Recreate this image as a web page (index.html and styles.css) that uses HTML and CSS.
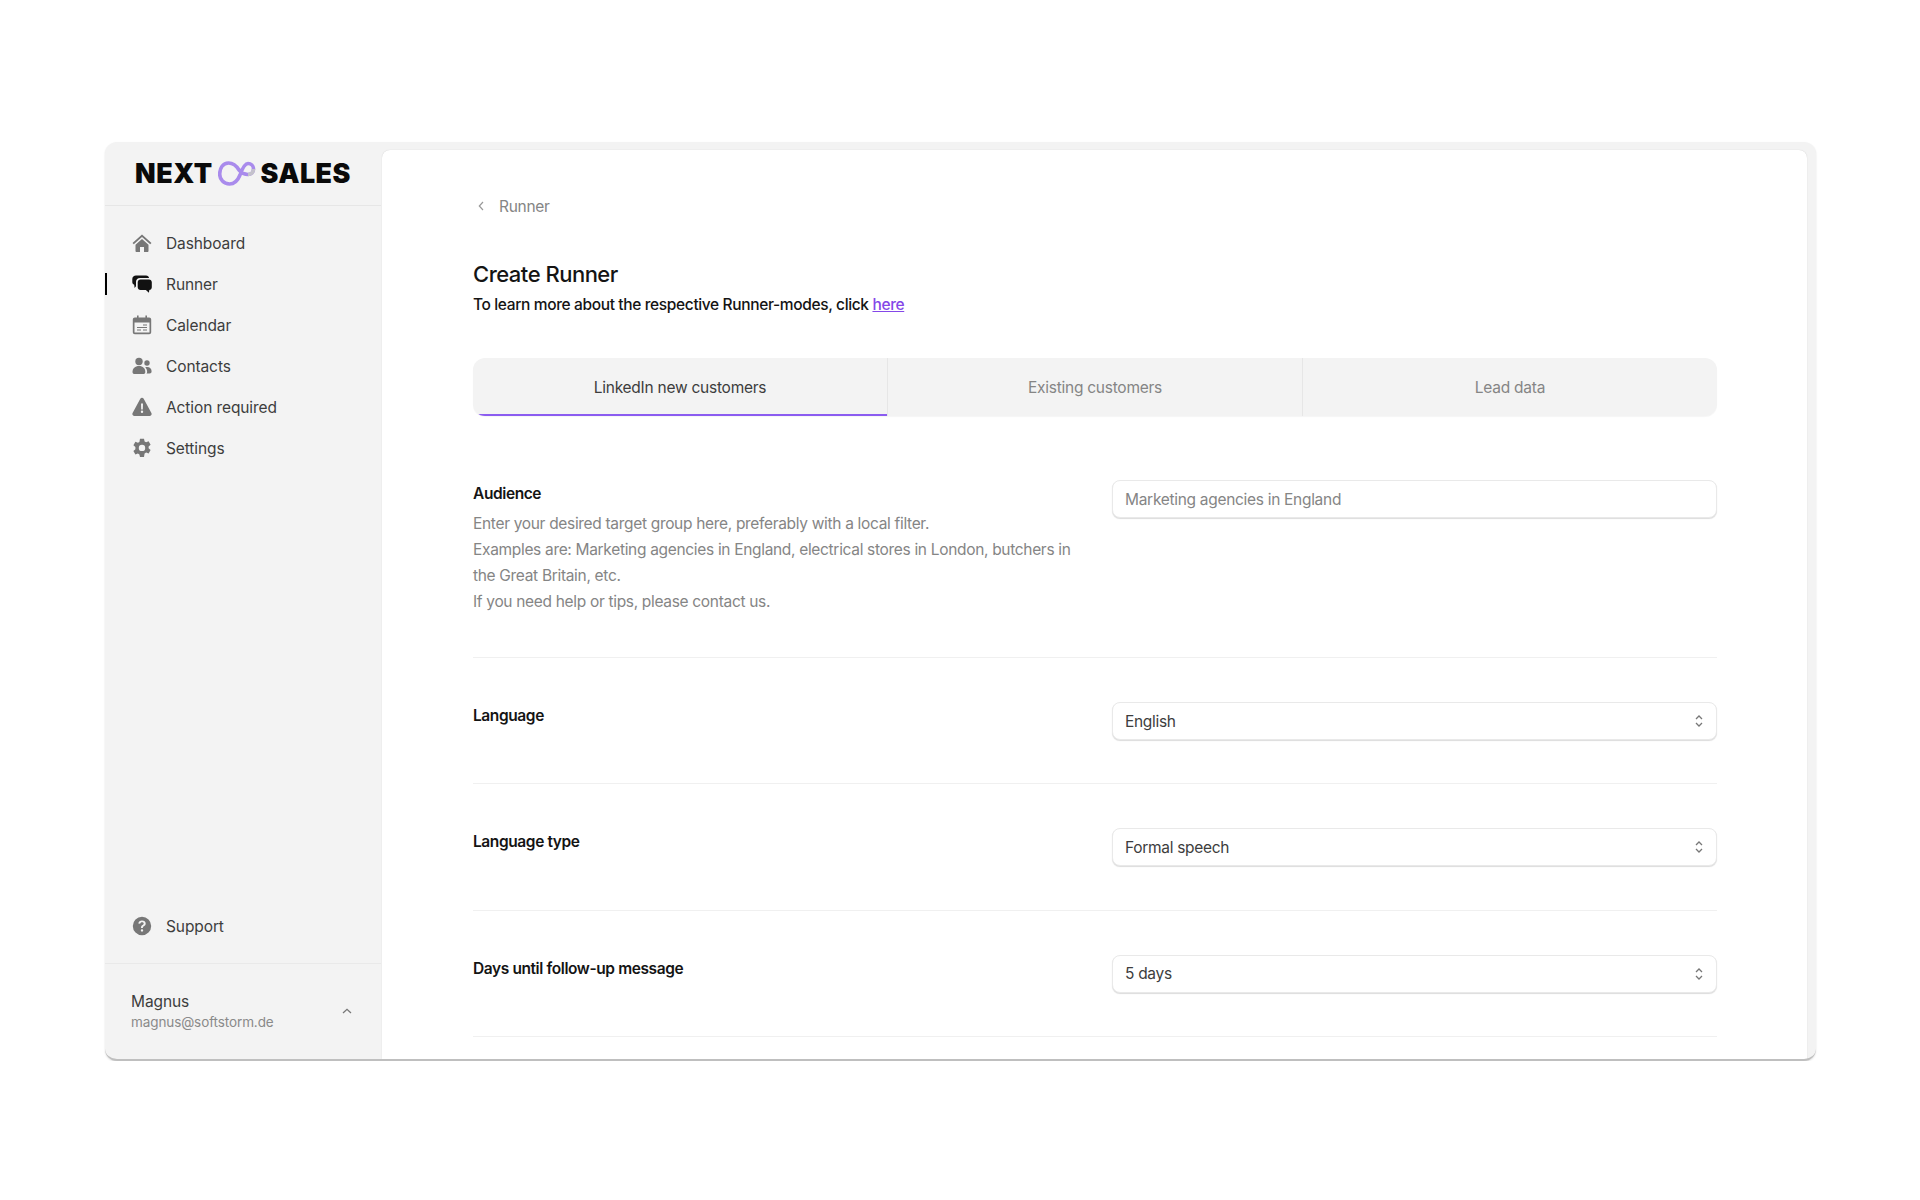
FILE: index.html
```html
<!DOCTYPE html>
<html lang="en">
<head>
    <meta charset="UTF-8">
    <meta name="viewport" content="width=device-width, initial-scale=1.0">
    <title>Create Runner</title>
    <link rel="stylesheet" href="styles.css">
</head>
<body>
    <div class="shell">
        <aside class="sidebar">
            <div class="logo">
                <span>NEXT</span>
                <svg class="logo-mark" viewBox="0 0 38 26" width="38" height="26">
                    <path d="M21 10C18 5 14.500 3 10.500 3 5 3 1.700 8 1.700 14c0 5.500 4 10 9.800 10 5 0 8.500-4 10.500-9 1.800-5 4.500-11.500 8-11.500 3 0 5.500 2.500 5.500 5.500s-2.500 5.500-5.500 5.500c-3.500 0-6.500-1.500-9-4.500z" fill="none" stroke="#a98bec" stroke-width="3.600"/>
                    <path d="M35.500 9c0 3-2.500 5.500-5.500 5.500" fill="none" stroke="#c4c2cb" stroke-width="3.600"/>
                </svg>
                <span>SALES</span>
            </div>
            <nav class="nav">
                <a class="nav-item">
                    <svg class="nav-icon" viewBox="0 0 20 20"><path d="M10 1.500 0.500 10l1.300 1.300L10 4l8.200 7.300 1.300-1.300zM3.500 11.700 10 6l6.500 5.700V18a.9.9 0 0 1-.9.900H12v-5H8v5H4.400a.9.900 0 0 1-.9-.9z"/></svg>
                    Dashboard
                </a>
                <a class="nav-item active">
                    <svg class="nav-icon" viewBox="0 0 20 20"><path d="M7 1.500h7c1.700 0 3 1 3 2.500H8C5.800 4 4 5.500 4 7.800v4.400L2.600 14l-.4-3.200C1 10.400.3 9.300.3 8V5C.3 3 2 1.500 4 1.500z"/><path d="M8.500 5.500h8.500c1.600 0 2.800 1.200 2.800 2.800v4.900c0 1.500-1.100 2.700-2.500 2.800l-.4 2.800-3-2.800H8.500c-1.600 0-2.800-1.200-2.800-2.800V8.300c0-1.600 1.200-2.800 2.800-2.800z"/></svg>
                    Runner
                </a>
                <a class="nav-item">
                    <svg class="nav-icon" viewBox="0 0 20 20"><path fill-rule="evenodd" d="M5 .5h1.600v2h6.800v-2H15v2h2.200c1.100 0 2 .9 2 2v12.800c0 1.100-.9 2-2 2H2.800c-1.100 0-2-.9-2-2V4.500c0-1.100.9-2 2-2H5zM2.500 7.500v9.800c0 .2.100.3.300.3h14.400c.2 0 .3-.1.300-.3V7.500z"/><path d="M11 9.500h4v1h-4zM5 12h10v1H5zM5 14.500h4v1H5zM11 14.500h4v1h-4z"/></svg>
                    Calendar
                </a>
                <a class="nav-item">
                    <svg class="nav-icon" viewBox="0 0 20 20"><circle cx="7" cy="5.500" r="3.700"/><circle cx="15" cy="7" r="2.700"/><path d="M.5 16c0-3.500 2.500-6 6.500-6s6.300 2.500 6.300 6c0 1.500-1 2-2 2H2.500c-1 0-2-.5-2-2z"/><path d="M14.500 17.500c.5-.5.600-1 .6-1.700 0-1.800-.7-3.300-1.900-4.500.6-.3 1.200-.4 1.900-.4 2.800 0 4.500 1.800 4.500 4.300 0 1.300-.8 2.300-2 2.300z"/></svg>
                    Contacts
                </a>
                <a class="nav-item">
                    <svg class="nav-icon" viewBox="0 0 20 20"><path fill-rule="evenodd" d="M10 .8c.7 0 1.300.4 1.700 1l7.700 14.300c.7 1.400-.2 2.900-1.700 2.900H2.300C.8 19-.1 17.500.6 16.100L8.300 1.800c.4-.6 1-1 1.700-1zM9 6.500l.2 6h1.600l.2-6zM10 13.600a1.200 1.200 0 1 0 0 2.400 1.200 1.200 0 0 0 0-2.400z"/></svg>
                    Action required
                </a>
                <a class="nav-item">
                    <svg class="nav-icon" viewBox="0 0 20 20"><path fill-rule="evenodd" d="M8 .8h4l.6 2.600 1.500.8 2.500-.9 2 3.400-2 1.800v1.700l2 1.800-2 3.400-2.500-.9-1.500.9L12 18.900H8l-.6-2.500-1.500-.9-2.500.9-2-3.400 2-1.800V9l-2-1.800 2-3.400 2.500.9 1.500-.8zM10 6.700a3.200 3.200 0 1 0 0 6.400 3.200 3.200 0 0 0 0-6.400z"/></svg>
                    Settings
                </a>
            </nav>
            <a class="nav-item support">
                <svg class="nav-icon" viewBox="0 0 20 20"><path fill-rule="evenodd" d="M10 .8a9.200 9.200 0 1 1 0 18.400A9.200 9.200 0 0 1 10 .8zM10 4.500c-2 0-3.400 1-3.700 2.900l1.800.4c.2-1 .9-1.600 1.900-1.600s1.700.5 1.700 1.300c0 .7-.4 1-1.200 1.500-1 .6-1.500 1.300-1.500 2.400v.6h1.900v-.4c0-.6.300-.9 1-1.300 1-.6 1.800-1.300 1.800-2.800 0-1.900-1.500-3-3.700-3zM10 13.200a1.200 1.200 0 1 0 0 2.400 1.200 1.200 0 0 0 0-2.400z"/></svg>
                Support
            </a>
            <div class="user">
                <div>
                    <div class="user-name">Magnus</div>
                    <div class="user-mail">magnus@softstorm.de</div>
                </div>
                <svg class="user-toggle" viewBox="0 0 10 6" width="10" height="6"><path d="M1 5l4-3.700L9 5" fill="none" stroke="#777" stroke-width="1.300"/></svg>
            </div>
        </aside>

        <main class="main">
            <a class="crumb">
                <svg viewBox="0 0 6 10" width="6" height="10"><path d="M5 1 1.300 5 5 9" fill="none" stroke="#999" stroke-width="1.200"/></svg>
                Runner
            </a>
            <h1 class="title">Create Runner</h1>
            <p class="subtitle">To learn more about the respective Runner-modes, click <a href="#">here</a></p>

            <div class="tabs">
                <div class="tab active">LinkedIn new customers</div>
                <div class="tab">Existing customers</div>
                <div class="tab">Lead data</div>
            </div>

            <section class="row first">
                <div>
                    <div class="label">Audience</div>
                    <p class="help">Enter your desired target group here, preferably with a local filter.<br>Examples are: Marketing agencies in England, electrical stores in London, butchers in the Great Britain, etc.<br>If you need help or tips, please contact us.</p>
                </div>
                <input class="field" type="text" placeholder="Marketing agencies in England">
            </section>

            <section class="row">
                <div class="label">Language</div>
                <button class="field select">English
                    <svg viewBox="0 0 8 14" width="8" height="14"><path d="M1 5l3-3 3 3M1 9l3 3 3-3" fill="none" stroke="#777" stroke-width="1.300"/></svg>
                </button>
            </section>

            <section class="row">
                <div class="label">Language type</div>
                <button class="field select">Formal speech
                    <svg viewBox="0 0 8 14" width="8" height="14"><path d="M1 5l3-3 3 3M1 9l3 3 3-3" fill="none" stroke="#777" stroke-width="1.300"/></svg>
                </button>
            </section>

            <section class="row">
                <div class="label">Days until follow-up message</div>
                <button class="field select">5 days
                    <svg viewBox="0 0 8 14" width="8" height="14"><path d="M1 5l3-3 3 3M1 9l3 3 3-3" fill="none" stroke="#777" stroke-width="1.300"/></svg>
                </button>
            </section>
        </main>
    </div>
</body>
</html>
```

FILE: styles.css
```css
body {
    margin: 0;
    background-color: #ffffff;
    font-family: Inter, "Liberation Sans", sans-serif;
    color: #1a1a1a;
}
.shell {
    display: flex;
    box-sizing: border-box;
    width: 1711px;
    height: 919px;
    margin: 142px 0 0 105px;
    background-color: #f3f3f3;
    border-bottom: 2px solid #bfbfbf;
    border-radius: 12px;
    box-shadow: 0 1px 2px rgba(0, 0, 0, 0.12);
    overflow: hidden;
}

/* sidebar */
.sidebar {
    display: flex;
    flex-direction: column;
    width: 276px;
    flex-shrink: 0;
}
.logo {
    display: flex;
    align-items: center;
    justify-content: center;
    gap: 5px;
    height: 61px;
    padding-bottom: 2px;
    border-bottom: 1px solid #e6e6e6;
    font-size: 26.8px;
    font-weight: 900;
    letter-spacing: 0.5px;
    color: #0a0a0a;
}
.nav {
    flex: 1;
    padding-top: 17px;
}
.nav-item {
    display: flex;
    align-items: center;
    gap: 14px;
    height: 41px;
    padding-left: 27px;
    font-size: 15.5px;
    letter-spacing: -0.1px;
    color: #3d3d3d;
}
.nav-item.active {
    position: relative;
}
.nav-item.active::before {
    content: "";
    position: absolute;
    left: 0;
    top: 9px;
    width: 2px;
    height: 22px;
    background-color: #000000;
}
.nav-icon {
    width: 20px;
    height: 20px;
    margin-bottom: 2px;
    fill: #777777;
}
.nav-item.active .nav-icon {
    fill: #111111;
}
.support {
    margin-bottom: 16px;
}
.user {
    display: flex;
    align-items: center;
    justify-content: space-between;
    height: 95px;
    padding: 0 29px 0 26px;
    border-top: 1px solid #e9e9e9;
}
.user-toggle {
    margin-bottom: 2px;
}
.user-name {
    font-size: 15.5px;
    letter-spacing: -0.1px;
    line-height: 20px;
    color: #3d3d3d;
}
.user-mail {
    font-size: 13.5px;
    letter-spacing: -0.1px;
    line-height: 20px;
    color: #8a8a8a;
}

/* main panel */
.main {
    flex: 1;
    margin: 8px 9px 0 1px;
    padding: 0 90px 0 91px;
    background-color: #ffffff;
    border-radius: 8px 8px 0 0;
    box-shadow: 0 0 1px rgba(0, 0, 0, 0.2);
    overflow: hidden;
}
.crumb {
    display: flex;
    align-items: center;
    gap: 15px;
    height: 20px;
    margin-top: 46px;
    padding-left: 5px;
    font-size: 15.5px;
    letter-spacing: -0.3px;
    color: #858585;
}
.title {
    margin: 43px 0 0;
    font-size: 22px;
    line-height: 30px;
    font-weight: 500;
    letter-spacing: -0.5px;
    color: #141414;
}
.subtitle {
    margin: 4px 0 0;
    font-size: 15.5px;
    line-height: 24px;
    font-weight: 500;
    letter-spacing: -0.36px;
    color: #141414;
}
.subtitle a {
    color: #8447e8;
}
.tabs {
    display: flex;
    height: 58px;
    margin-top: 41px;
    background-color: #f3f3f3;
    border-radius: 12px;
    box-shadow: 0 1px 1px rgba(0, 0, 0, 0.04);
    overflow: hidden;
}
.tab {
    flex: 1;
    display: flex;
    align-items: center;
    justify-content: center;
    padding-top: 1px;
    font-size: 15.5px;
    letter-spacing: -0.25px;
    color: #858585;
    border-left: 1px solid #e6e6e6;
}
.tab:first-child {
    border-left: none;
}
.tab.active {
    position: relative;
    color: #3d3d3d;
}
.tab.active::after {
    content: "";
    position: absolute;
    left: 4px;
    right: 0;
    bottom: 0;
    height: 2px;
    background-color: #8b5cf0;
}
.row {
    display: grid;
    grid-template-columns: 1fr 605px;
    column-gap: 32px;
    padding: 44px 0 43.25px;
    border-bottom: 1px solid #f0f0f0;
}
.row.first {
    padding: 64px 0 42px;
}
.label {
    font-size: 15.5px;
    line-height: 28px;
    font-weight: 600;
    letter-spacing: -0.4px;
    color: #141414;
}
.help {
    margin: 3px 0 0;
    font-size: 15.5px;
    line-height: 26px;
    letter-spacing: -0.32px;
    color: #858585;
}
.field {
    box-sizing: border-box;
    width: 100%;
    height: 38px;
    padding: 0 12px;
    background-color: #ffffff;
    border: 1px solid #e9e9e9;
    border-radius: 8px;
    box-shadow: 0 1px 1px rgba(0, 0, 0, 0.14);
    font-family: inherit;
    font-size: 15.5px;
    letter-spacing: -0.3px;
    color: #3d3d3d;
    outline: none;
}
.field::placeholder {
    color: #858585;
    opacity: 1;
}
.select {
    display: flex;
    align-items: center;
    justify-content: space-between;
    padding-right: 13px;
    text-align: left;
}
```
